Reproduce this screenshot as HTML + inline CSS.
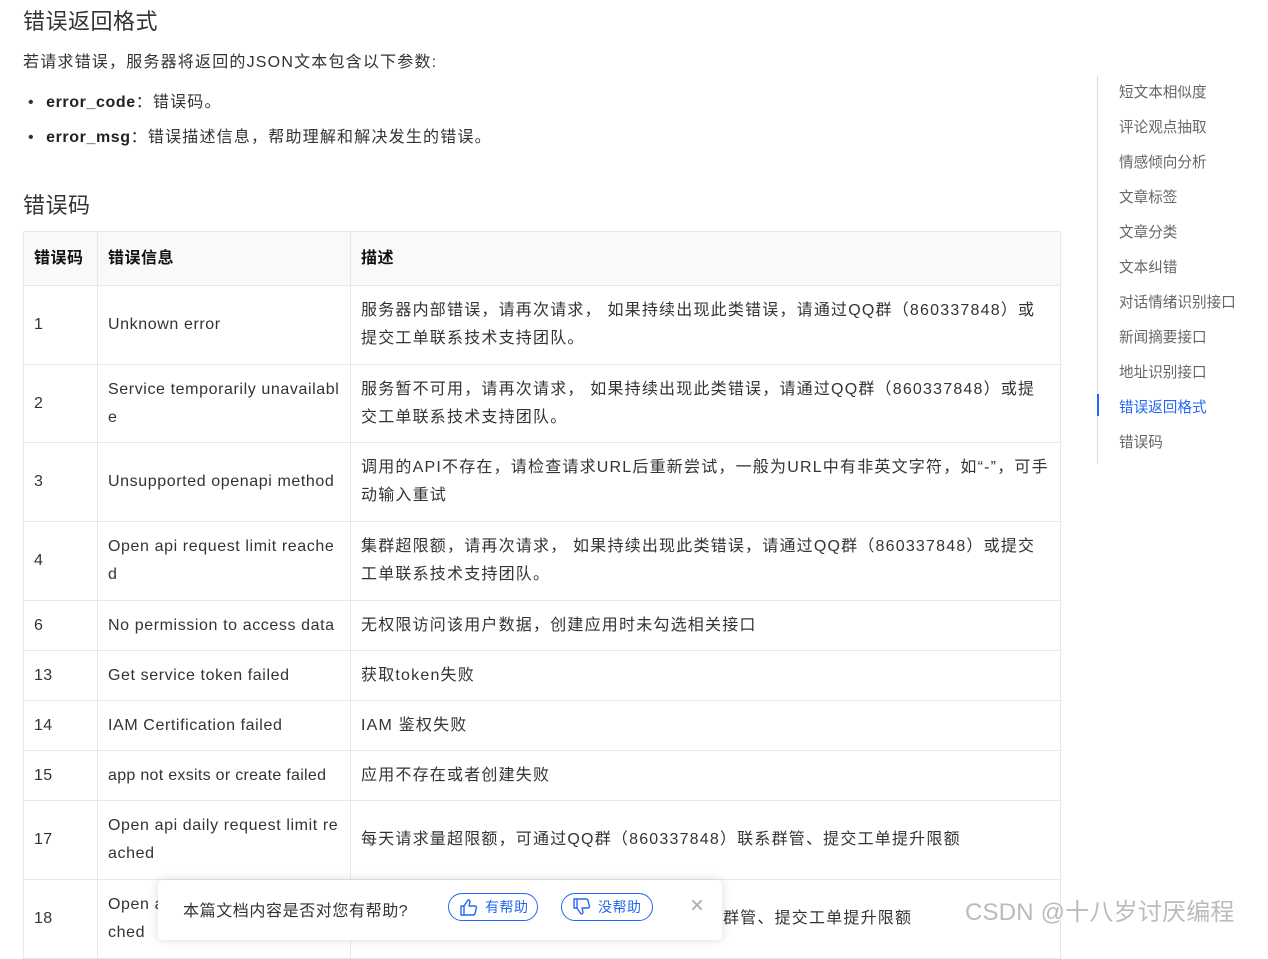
<!DOCTYPE html>
<html><head><meta charset="utf-8"><style>
body{margin:0;width:1268px;height:930px;overflow:hidden;background:#fff;font-family:"Liberation Sans","Noto Sans CJK SC",sans-serif;color:#333;position:relative;letter-spacing:1.2px}
.a{position:absolute;white-space:nowrap}
h2{position:absolute;margin:0;font-weight:normal;font-size:22px;color:#333;left:23px;letter-spacing:0.5px}
table{position:absolute;left:23px;top:231px;border-collapse:collapse;table-layout:fixed;width:1037px;font-size:16px}
td,th{border:1px solid #e8e8e8;padding:0 10px;text-align:left;line-height:28px;vertical-align:middle;color:#333;word-break:break-all}
td:nth-child(2){letter-spacing:0.6px}
td:first-child{letter-spacing:0.3px}
th{background:#f9f9f9;font-weight:bold;color:#111;height:53px;letter-spacing:0.5px}
.nav{position:absolute;left:1097px;top:76px;border-left:1px solid #ddd;height:388px}
.nav div{position:absolute;left:21px;font-size:14.6px;color:#666;white-space:nowrap;letter-spacing:0}
.btn{position:absolute;top:13px;height:28px;border:1px solid #2468f2;border-radius:15px;color:#2468f2;font-size:14px;line-height:26px;box-sizing:border-box;padding-left:36px;letter-spacing:0.5px}
.btn svg{position:absolute;left:10px;top:4px}
</style></head><body>
<h2 style="top:4px">错误返回格式</h2>
<div class="a" style="left:23px;top:48px;font-size:16px">若请求错误，服务器将返回的JSON文本包含以下参数:</div>
<div class="a" style="left:28px;top:88px;font-size:16px">•&nbsp; <b style="color:#222;letter-spacing:0.6px">error_code</b>：错误码。</div>
<div class="a" style="left:28px;top:123px;font-size:16px">•&nbsp; <b style="color:#222;letter-spacing:0.6px">error_msg</b>：错误描述信息，帮助理解和解决发生的错误。</div>
<h2 style="top:188px">错误码</h2>
<table>
<colgroup><col style="width:74px"><col style="width:253px"><col style="width:710px"></colgroup>
<tr><th>错误码</th><th>错误信息</th><th>描述</th></tr>
<tr style="height:79px"><td>1</td><td>Unknown error</td><td>服务器内部错误，请再次请求， 如果持续出现此类错误，请通过QQ群（860337848）或提交工单联系技术支持团队。</td></tr>
<tr style="height:78px"><td>2</td><td>Service temporarily unavailable</td><td>服务暂不可用，请再次请求， 如果持续出现此类错误，请通过QQ群（860337848）或提交工单联系技术支持团队。</td></tr>
<tr style="height:79px"><td>3</td><td>Unsupported openapi method</td><td>调用的API不存在，请检查请求URL后重新尝试，一般为URL中有非英文字符，如“-”，可手动输入重试</td></tr>
<tr style="height:79px"><td>4</td><td>Open api request limit reached</td><td>集群超限额，请再次请求， 如果持续出现此类错误，请通过QQ群（860337848）或提交工单联系技术支持团队。</td></tr>
<tr style="height:50px"><td>6</td><td style="white-space:nowrap">No permission to access data</td><td>无权限访问该用户数据，创建应用时未勾选相关接口</td></tr>
<tr style="height:50px"><td>13</td><td>Get service token failed</td><td>获取token失败</td></tr>
<tr style="height:50px"><td>14</td><td>IAM Certification failed</td><td>IAM 鉴权失败</td></tr>
<tr style="height:50px"><td>15</td><td style="white-space:nowrap;letter-spacing:0.3px">app not exsits or create failed</td><td>应用不存在或者创建失败</td></tr>
<tr style="height:79px"><td>17</td><td>Open api daily request limit reached</td><td>每天请求量超限额，可通过QQ群（860337848）联系群管、提交工单提升限额</td></tr>
<tr style="height:79px"><td>18</td><td>Open api qps request limit reached</td><td>QPS超限额，可通过QQ群（860337848）联系群管、提交工单提升限额</td></tr>
</table>
<div class="nav">
<div style="top:5px">短文本相似度</div><div style="top:40px">评论观点抽取</div><div style="top:75px">情感倾向分析</div><div style="top:110px">文章标签</div><div style="top:145px">文章分类</div><div style="top:180px">文本纠错</div><div style="top:215px">对话情绪识别接口</div><div style="top:250px">新闻摘要接口</div><div style="top:285px">地址识别接口</div><div style="top:320px;color:#2468f2">错误返回格式</div><div style="top:355px">错误码</div>
<span style="position:absolute;left:-1px;top:318px;width:2px;height:22px;background:#2468f2"></span>
</div>
<div style="position:absolute;left:158px;top:880px;width:564px;height:60px;background:#fff;box-shadow:0 0 10px rgba(0,0,0,.15);border-radius:4px">
<div class="a" style="left:25px;top:17px;font-size:16px;color:#333;letter-spacing:0.6px">本篇文档内容是否对您有帮助?</div>
<div class="btn" style="left:290px;width:90px">有帮助<svg width="20" height="18" viewBox="0 0 20 18" fill="none" stroke="#2468f2" stroke-width="1.4" stroke-linejoin="round"><path d="M2 8h3v9H2zM5 8l4-6c1.5 0 2 1 2 2l-1 4h6c1 0 1.6 1 1.4 2l-1.4 5.5c-.3 1-1 1.5-2 1.5H5"/></svg></div>
<div class="btn" style="left:403px;width:92px">没帮助<svg width="20" height="18" viewBox="0 0 20 18" fill="none" stroke="#2468f2" stroke-width="1.4" stroke-linejoin="round"><path d="M2 1h3v9H2zM5 10l4 6c1.5 0 2-1 2-2l-1-4h6c1 0 1.6-1 1.4-2L16 2.5C15.7 1.5 15 1 14 1H5"/></svg></div>
<div class="a" style="left:532px;top:12px;font-size:24px;color:#aaa;letter-spacing:0">×</div>
</div>
<div class="a" style="left:965px;top:892px;font-size:24px;color:#bbb;letter-spacing:0.2px">CSDN @十八岁讨厌编程</div>
</body></html>
